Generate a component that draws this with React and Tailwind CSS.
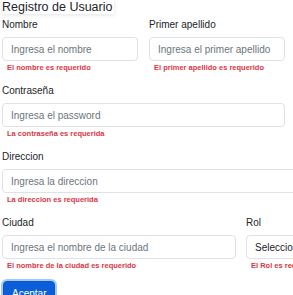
import React from 'react';

const Field = ({ label, placeholder, error, width, select }) => (
  <div className={`${width} shrink-0 mb-[10px]`}>
    <label className="block text-[10px] leading-[15px] text-[#212529] mb-[5px]">{label}</label>
    {select ? (
      <select className="block w-full h-[24px] rounded-[4px] border border-[#dee2e6] bg-white pl-[8px] text-[10px] text-[#212529] appearance-none outline-none">
        <option>Seleccione un rol</option>
      </select>
    ) : (
      <input
        className="block w-full h-[24px] rounded-[4px] border border-[#dee2e6] bg-white px-[8px] text-[10px] text-[#212529] placeholder:text-[#6c757d] outline-none"
        placeholder={placeholder}
      />
    )}
    <div className="mt-[1px] pl-[5px] text-[7.5px] leading-[11px] font-bold text-[#dc3545] whitespace-nowrap">{error}</div>
  </div>
);

const App = () => {
  return (
    <div className="w-[293px] h-[295px] overflow-hidden bg-white font-['Liberation_Sans',Arial,sans-serif]">
      <div className="w-[400px] pl-[2px]">
        {/* Title */}
        <h5 className="w-fit bg-white pr-[2px] text-[12.5px] leading-[14px] font-medium text-[#212529] shadow-[0_1px_4px_rgba(0,0,0,0.12)] mb-[3px]">
          Registro de Usuario
        </h5>

        <div className="flex gap-[11px]">
          <Field width="w-[136px]" label="Nombre" placeholder="Ingresa el nombre" error="El nombre es requerido" />
          <Field width="w-[136px]" label="Primer apellido" placeholder="Ingresa el primer apellido" error="El primer apellido es requerido" />
        </div>

        <Field width="w-[283px]" label="Contraseña" placeholder="Ingresa el password" error="La contraseña es requerida" />
        <Field width="w-[340px]" label="Direccion" placeholder="Ingresa la direccion" error="La direccion es requerida" />

        <div className="flex gap-[10px]">
          <Field width="w-[234px]" label="Ciudad" placeholder="Ingresa el nombre de la ciudad" error="El nombre de la ciudad es requerido" />
          <Field width="w-[100px]" label="Rol" select error="El Rol es requerido" />
        </div>

        <button className="block ml-[1px] rounded-[4px] border border-[#0a58ca] bg-[#0b5ed7] px-[8px] py-[4px] text-[10px] leading-[15px] text-white shadow-[0_0_0_2px_rgba(49,132,253,0.45)]">
          Aceptar
        </button>
      </div>
    </div>
  );
};

export default App;
